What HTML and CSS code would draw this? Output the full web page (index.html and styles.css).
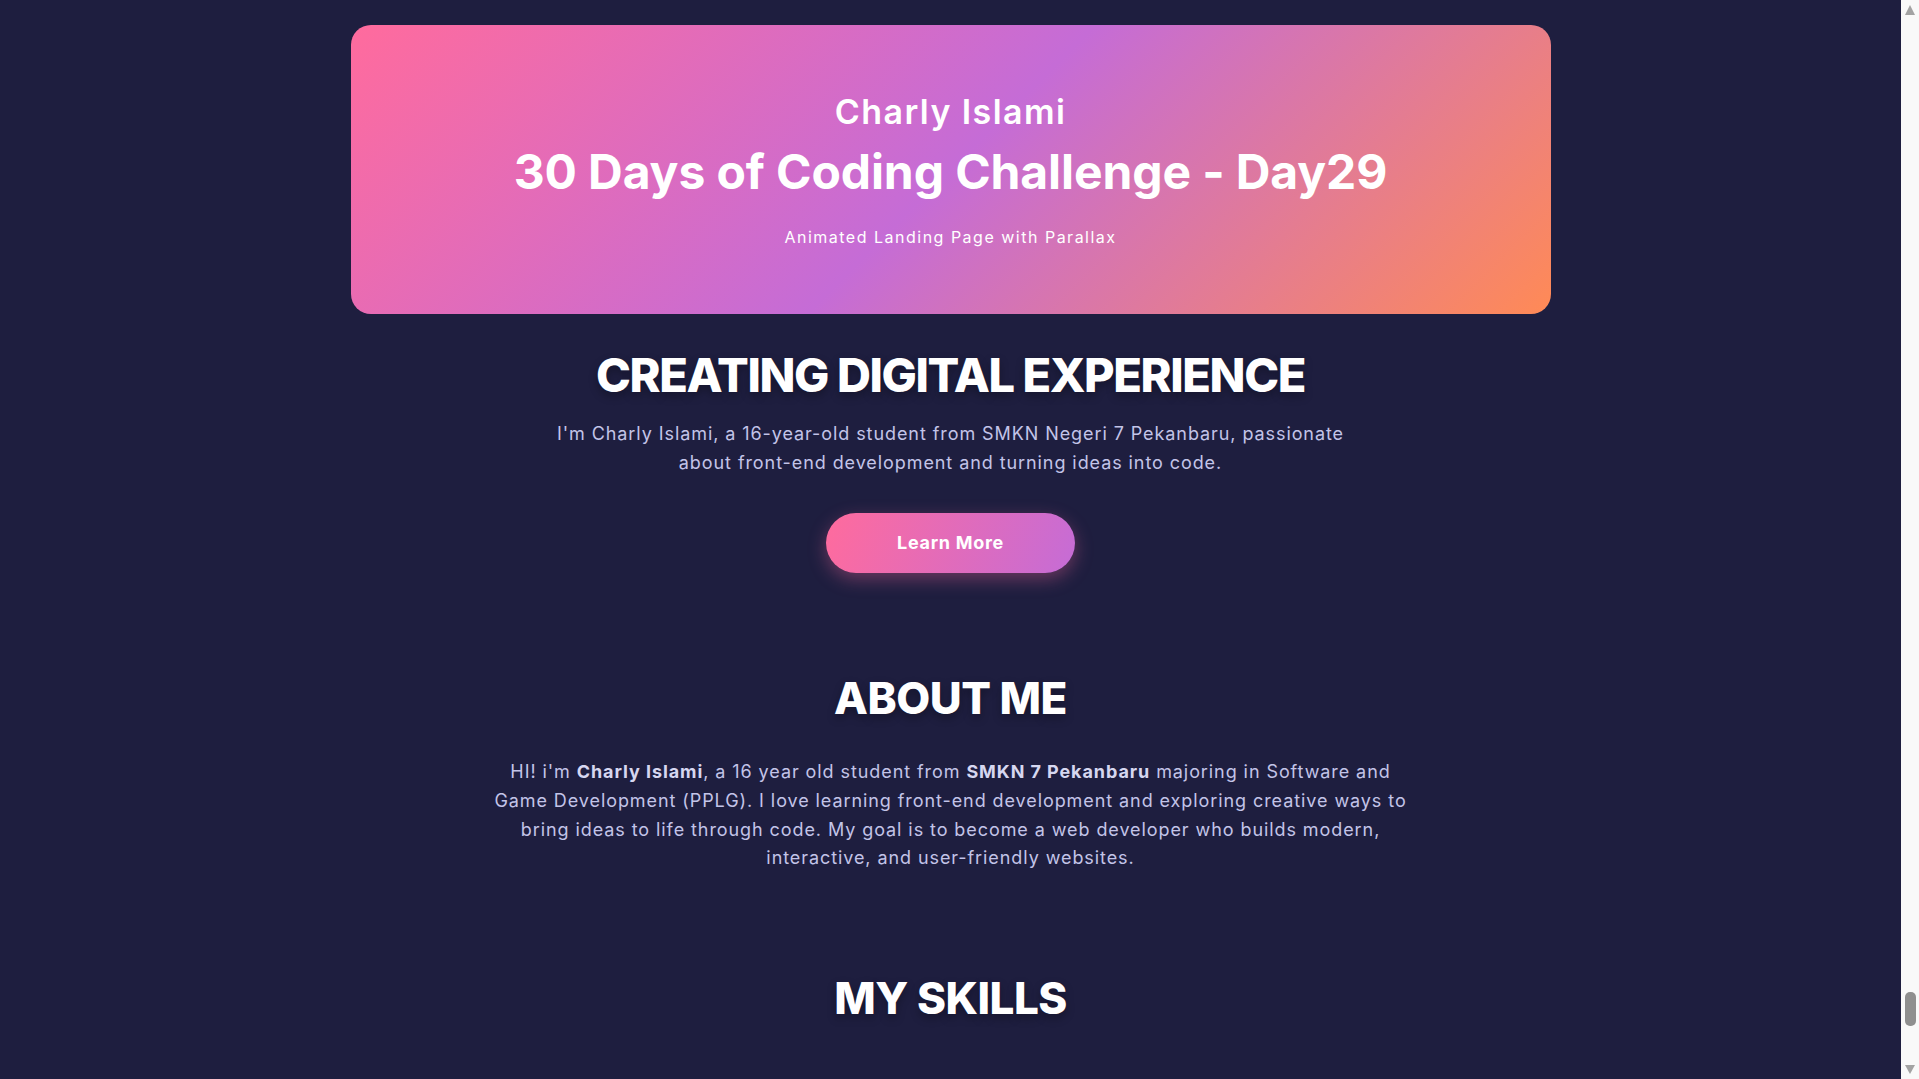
FILE: index.html
```html
<!DOCTYPE html>
<html lang="en">
<head>
<meta charset="UTF-8">
<title>Day29 - Animated Landing Page with Parallax</title>
<link rel="stylesheet" href="styles.css">
</head>
<body>
  <main class="page">
    <header class="banner">
      <h3 class="banner-name">Charly Islami</h3>
      <h1 class="banner-title">30 Days of Coding Challenge - Day29</h1>
      <p class="banner-sub">Animated Landing Page with Parallax</p>
    </header>

    <section class="hero">
      <h2 class="hero-title">CREATING DIGITAL EXPERIENCE</h2>
      <p class="hero-text">I'm Charly Islami, a 16-year-old student from SMKN Negeri 7 Pekanbaru, passionate about front-end development and turning ideas into code.</p>
      <a class="btn" href="#about">Learn More</a>
    </section>

    <section class="about" id="about">
      <h2 class="section-title">ABOUT ME</h2>
      <p class="about-text">HI! i'm <strong>Charly Islami</strong>, a 16 year old student from <strong>SMKN 7 Pekanbaru</strong> majoring in Software and Game Development (PPLG). I love learning front-end development and exploring creative ways to bring ideas to life through code. My goal is to become a web developer who builds modern, interactive, and user-friendly websites.</p>
    </section>

    <section class="skills">
      <h2 class="section-title">MY SKILLS</h2>
    </section>
  </main>

  <aside class="scrollbar" aria-hidden="true">
    <span class="sb-arrow sb-up"></span>
    <span class="sb-track"><span class="sb-thumb"></span></span>
    <span class="sb-arrow sb-down"></span>
  </aside>
</body>
</html>
```
FILE: styles.css
```css
* { box-sizing: border-box; }

html, body { height: 100%; }

body {
  margin: 0;
  background: #1e1e3f;
  color: #ffffff;
  font-family: "Inter", "Noto Sans", sans-serif;
  overflow: hidden;
}

.page {
  margin-right: 18px;
  height: 100%;
  overflow: hidden;
}

.banner {
  max-width: 1200px;
  margin: 25px auto 0;
  padding: 67px 20px 65px;
  border-radius: 20px;
  background: linear-gradient(135deg, #ff6b9d 0%, #c56cd6 50%, #ff8a56 100%);
  display: flex;
  flex-direction: column;
  align-items: center;
  text-align: center;
}

.banner-name {
  margin: 0;
  font-size: 34px;
  line-height: 39.6px;
  font-weight: 600;
  letter-spacing: 1.4px;
}

.banner-title {
  margin: 11px 0 0;
  font-size: 48px;
  line-height: 57.6px;
  font-weight: 700;
  letter-spacing: -0.1px;
}

.banner-sub {
  margin: 26px 0 0;
  font-size: 16px;
  line-height: 22.5px;
  font-weight: 400;
  letter-spacing: 1.5px;
}

.hero {
  display: flex;
  flex-direction: column;
  align-items: center;
  text-align: center;
  padding: 33px 20px 0;
}

.hero-title {
  margin: 0;
  font-size: 47px;
  line-height: 56.4px;
  font-weight: 800;
  letter-spacing: -1.4px;
  text-shadow: 0 4px 10px rgba(0, 0, 0, 0.3);
}

.hero-text {
  margin: 17px 0 0;
  max-width: 820px;
  font-size: 18px;
  line-height: 28.8px;
  letter-spacing: 0.92px;
  color: #c3c4e8;
}

.btn {
  margin-top: 35px;
  display: inline-block;
  padding: 18px 71px;
  font-size: 18px;
  line-height: 24px;
  font-weight: 700;
  letter-spacing: 0.7px;
  color: #ffffff;
  text-decoration: none;
  border-radius: 30px;
  background: linear-gradient(110deg, #ff6b9d, #c56cd6);
  box-shadow: 0 6px 18px rgba(255, 107, 157, 0.35);
}

.about {
  display: flex;
  flex-direction: column;
  align-items: center;
  text-align: center;
  padding: 99px 20px 0;
}

.section-title {
  margin: 0;
  font-size: 44px;
  line-height: 52.8px;
  font-weight: 800;
  letter-spacing: -0.5px;
  text-shadow: 0 4px 10px rgba(0, 0, 0, 0.3);
}

.about-text {
  margin: 34px 0 0;
  max-width: 933px;
  font-size: 18px;
  line-height: 28.6px;
  letter-spacing: 0.92px;
  color: #c3c4e8;
}

.about-text strong {
  color: #d6d7f0;
  font-weight: 700;
}

.skills {
  display: flex;
  flex-direction: column;
  align-items: center;
  padding: 99px 20px 200px;
}

/* Browser scrollbar, drawn over the right edge */
.scrollbar {
  position: fixed;
  top: 0;
  right: 0;
  bottom: 0;
  width: 18px;
  background: #f9f9f9;
  display: flex;
  flex-direction: column;
  align-items: center;
}

.sb-arrow {
  width: 0;
  height: 0;
  border-left: 5.5px solid transparent;
  border-right: 5.5px solid transparent;
}

.sb-up {
  margin-top: 5px;
  border-bottom: 10px solid #a3a3a3;
}

.sb-down {
  margin-bottom: 5px;
  border-top: 9px solid #a3a3a3;
}

.sb-track {
  flex: 1;
  width: 100%;
  display: flex;
  flex-direction: column;
  justify-content: flex-end;
  align-items: center;
  padding-bottom: 39px;
}

.sb-thumb {
  width: 11px;
  height: 34px;
  border-radius: 5px;
  background: #8f8f8f;
}
```
